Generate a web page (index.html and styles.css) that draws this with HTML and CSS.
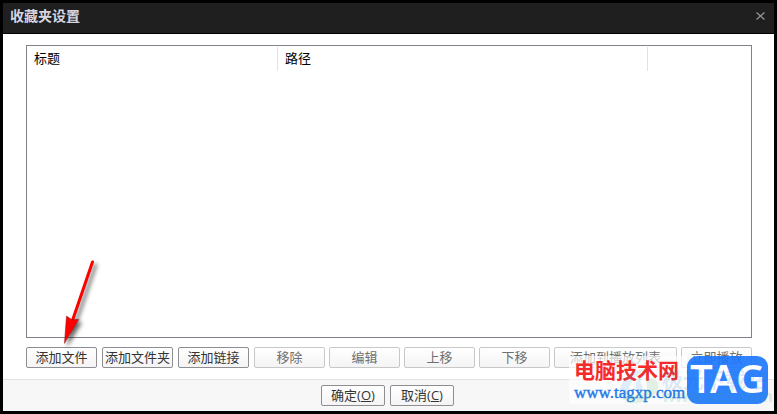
FILE: index.html
```
<!DOCTYPE html>
<html lang="zh-CN">
  <head>
    <meta charset="UTF-8" />
    <meta name="viewport" content="width=device-width, initial-scale=1.0" />
    <link rel="stylesheet" href="styles.css">
    <title>收藏夹设置</title>
  </head>
  <body>
    <div class="dialog">
      <div class="header">
        <div class="title">收藏夹设置</div>
        <button type="button" class="close" aria-label="关闭">
          <svg width="9" height="8" viewBox="0 0 9 8">
            <path d="M0.5 0.5L8.5 7.5M8.5 0.5L0.5 7.5" stroke="#929292" stroke-width="1.3" fill="none" />
          </svg>
        </button>
      </div>
      <div class="content">
        <div class="list">
          <table class="list-table">
            <thead>
              <tr>
                <th class="col-title">标题</th>
                <th class="col-path">路径</th>
                <td></td>
              </tr>
            </thead>
          </table>
        </div>
        <div class="toolbar">
          <div class="group group-add">
            <button type="button" class="btn">添加文件</button>
            <button type="button" class="btn">添加文件夹</button>
            <button type="button" class="btn">添加链接</button>
          </div>
          <div class="group">
            <button type="button" class="btn" disabled>移除</button>
            <button type="button" class="btn" disabled>编辑</button>
            <button type="button" class="btn" disabled>上移</button>
            <button type="button" class="btn" disabled>下移</button>
            <button type="button" class="btn btn-wide" disabled>添加到播放列表</button>
            <button type="button" class="btn" disabled>立即播放</button>
          </div>
        </div>
      </div>
      <div class="footer">
        <button type="button" class="btn btn-small">确定(<u>O</u>)</button>
        <button type="button" class="btn btn-small">取消(<u>C</u>)</button>
      </div>

      <svg class="arrow" width="50" height="100" viewBox="0 0 50 100">
        <path d="M32.500 12L13 69" />
        <path class="head" d="M4.500 93L6.500 66L11.500 69.500L18.500 69.500Z" />
      </svg>

      <div class="watermark">
        <div class="site">
          <div class="site-name">电脑技术网</div>
          <div class="site-url">www.tagxp.com</div>
        </div>
        <div class="tag">TAG</div>
        <div class="ghost">
          <svg width="44" height="40" viewBox="0 0 44 40">
            <path fill="#3a9be0" d="M31 1C15 2 3 11 1 27C4 31 8 31 12 28C8 17 18 7 31 1Z" />
            <path fill="#3a9be0" d="M34 3C21 8 16 15 18 22C24 27 26 19 23 17C21 13 26 8 34 3Z" />
            <path fill="#45ae60" d="M27 11C39 10 44 18 38 26C31 36 17 38 6 35C20 33 29 27 29 20C29 16 28 14 27 11Z" />
            <path fill="#45ae60" d="M5 29C15 31 23 27 25 21C28 29 17 35 5 33Z" />
          </svg>
          <div class="ghost-text">
            <div class="ghost-name">极光下载站</div>
            <div class="ghost-url">www.xz7.com</div>
          </div>
        </div>
      </div>
    </div>
  </body>
</html>
```
FILE: styles.css
```
* {
  box-sizing: border-box;
}
body {
  margin: 0;
  font-family: "Noto Sans CJK SC", sans-serif;
  font-size: 13px;
  color: #000000;
}
.dialog {
  position: relative;
  display: flex;
  flex-direction: column;
  height: 100vh;
  border: 3px solid #000000;
  background: #ffffff;
}
.header {
  display: flex;
  align-items: center;
  justify-content: space-between;
  height: 31px;
  padding: 0 9px 4px 7px;
  background: #1f1f1f;
  border-bottom: 1px solid #000000;
}
.title {
  padding-bottom: 2px;
  font-size: 14px;
  font-weight: bold;
  line-height: 20px;
  color: #d6d6e2;
}
.close {
  display: flex;
  padding: 0;
  border: 0;
  background: none;
}
.content {
  flex: 1;
  display: flex;
  flex-direction: column;
  padding: 11px 22px 11px 23px;
}
.list {
  flex: 1;
  padding: 1px 0;
  border: 1px solid #828089;
}
.list-table {
  width: 100%;
  border-spacing: 0;
  table-layout: fixed;
}
.list-table th,
.list-table td {
  height: 24px;
  padding: 0 7px 2px;
  font-weight: normal;
  line-height: 20px;
  text-align: left;
}
.list-table th {
  border-right: 1px solid #e2e2e2;
}
.col-title {
  width: 251px;
}
.col-path {
  width: 370px;
}
.toolbar {
  display: flex;
  justify-content: space-between;
  margin-top: 9px;
}
.group {
  display: flex;
  gap: 4px;
}
.group-add {
  gap: 5px;
}
.btn {
  width: 71px;
  height: 21px;
  padding: 0 0 2px;
  border: 1px solid #8e8e92;
  border-radius: 2px;
  background: linear-gradient(#ffffff, #f4f4f4);
  color: #333333;
  font-family: inherit;
  font-size: 13px;
  line-height: 17px;
  white-space: nowrap;
}
.btn:disabled {
  border-color: #c8c8c8;
  color: #707070;
}
.btn-wide {
  width: 123px;
}
.btn-small {
  width: 64px;
  padding: 0;
  font-family: "Open Sans", "Noto Sans CJK SC", sans-serif;
}
.footer {
  display: flex;
  justify-content: center;
  gap: 5px;
  height: 32px;
  padding: 5px 2px 0 0;
  border-top: 1px solid #e2e2e2;
  background: #f7f7f7;
}
.arrow {
  position: absolute;
  left: 57px;
  top: 247px;
  filter: drop-shadow(3px 3px 2px rgba(0, 0, 0, 0.6));
}
.arrow path {
  fill: none;
  stroke: #ff0000;
  stroke-width: 3;
  stroke-linecap: round;
}
.arrow .head {
  fill: #ff0000;
  stroke: #8a1010;
  stroke-width: 0.5;
}
.watermark {
  position: absolute;
  right: 6px;
  bottom: 7px;
  display: flex;
}
.site {
  width: 118px;
  padding: 1px 0 0 5px;
  background: rgba(255, 255, 255, 0.65);
  white-space: nowrap;
}
.site-name {
  font-size: 21px;
  font-weight: bold;
  line-height: 25px;
  color: #f52a2a;
}
.site-url {
  font-family: "Liberation Serif", serif;
  font-size: 17px;
  line-height: 22px;
  color: #1f78e8;
  -webkit-text-stroke: 0.4px #1f78e8;
}
.tag {
  width: 81px;
  height: 48px;
  border-radius: 11px;
  background: rgba(24, 117, 255, 0.9);
  color: #ffffff;
  font-family: "Noto Sans", sans-serif;
  font-size: 40px;
  font-weight: 600;
  line-height: 44px;
  text-align: center;
}
.ghost {
  position: absolute;
  right: 0;
  bottom: -3px;
  display: flex;
  opacity: 0.15;
}
.ghost-text {
  width: 106px;
  white-space: nowrap;
}
.ghost-name {
  font-size: 21px;
  font-weight: bold;
  line-height: 22px;
  color: #2877c8;
}
.ghost-url {
  font-family: "Liberation Sans", sans-serif;
  font-size: 17px;
  font-weight: bold;
  line-height: 16px;
  color: #299a60;
}
```
